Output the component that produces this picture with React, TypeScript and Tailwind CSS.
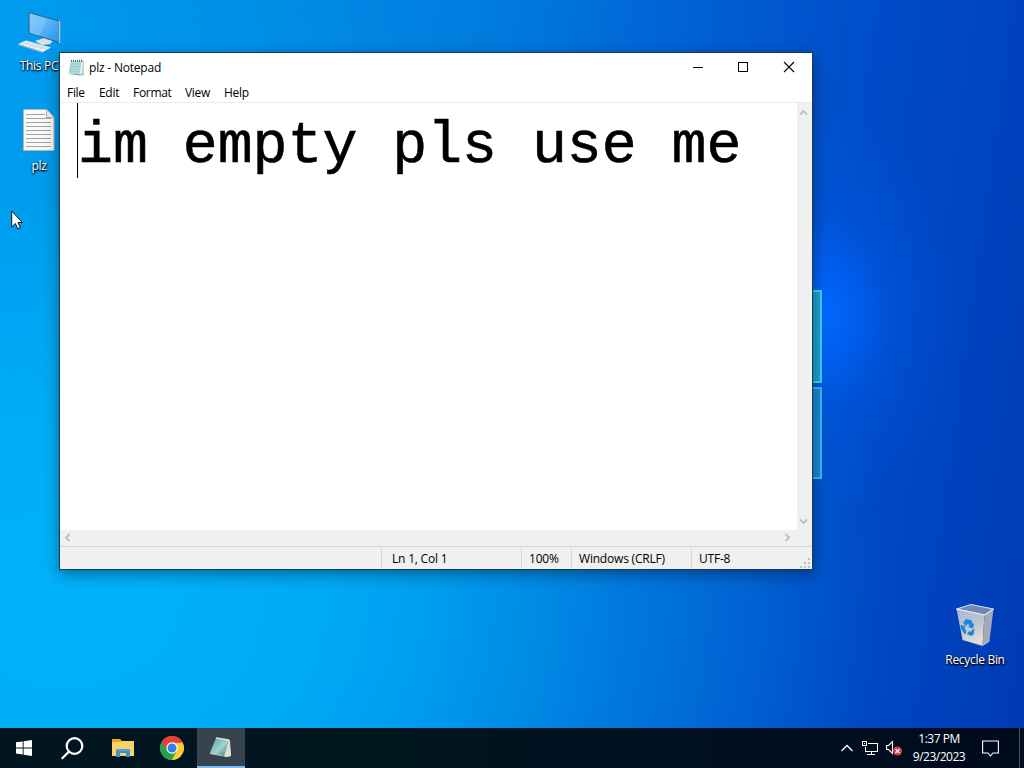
import type { ReactNode } from "react";

const menuItems = [
  { label: "File", width: "w-[18px]", gap: "mr-[14px]" },
  { label: "Edit", width: "w-[20px]", gap: "mr-[14px]" },
  { label: "Format", width: "w-[38px]", gap: "mr-[14px]" },
  { label: "View", width: "w-[25px]", gap: "mr-[14px]" },
  { label: "Help", width: "w-[25px]", gap: "" },
];

const statusCells = [
  { text: "Ln 1, Col 1", className: "w-[140px] pl-[10px]" },
  { text: "100%", className: "w-[50px] pl-[7px]" },
  { text: "Windows (CRLF)", className: "w-[120px] pl-[7px]" },
  { text: "UTF-8", className: "w-[110px] pl-[7px]" },
];

const grip = [[8, 0], [4, 4], [8, 4], [0, 8], [4, 8], [8, 8]];
const pageLines = [9, 13, 17, 21, 25, 29, 33, 37];

/* ── Desktop icons ─────────────────────────────── */

function ThisPcIcon() {
  return (
    <svg width="44" height="44" viewBox="0 0 44 44">
      <defs>
        <linearGradient id="screen" x1="0" y1="0" x2="1" y2="1">
          <stop offset="0" stopColor="#76c5fb" />
          <stop offset="0.5" stopColor="#59b3f6" />
          <stop offset="1" stopColor="#2593e9" />
        </linearGradient>
      </defs>
      <path d="M27 25l7 2v3l-7-1z" fill="#b9bfc5" />
      <path d="M18 30l9-3 9 3-3 3-8 1z" fill="#dcdfe2" />
      <path d="M12 1.500l30 8.500v21.500l-30-9.500z" fill="url(#screen)" stroke="#2a6390" strokeWidth="1" />
      <path d="M42.500 10v22" stroke="#b9c8d2" strokeWidth="1.400" />
      <path d="M13 3l17 5-8 17-9-3z" fill="#a9dcff" opacity=".28" />
      <path d="M1 33l8-3.500 25 7-8 4.500z" fill="#edf1f3" />
      <path d="M1 33l25 8v1L1 34z" fill="#a9b4bb" />
      <path d="M5 32l25 6.500M7.500 31l25 6.500M6 34.500l7-4M11 36l7-4.500M16 37.500l7-4M21 39l7-4" stroke="#c3ccd1" strokeWidth=".6" />
    </svg>
  );
}

function TextFileIcon() {
  return (
    <svg width="32" height="42" viewBox="0 0 32 42">
      <path d="M.5.500h23l7.500 8V41.500H.5z" fill="#fafafa" stroke="#b8b4b0" />
      <path d="M23.500.500v8H31" fill="#ececec" stroke="#b0b0b0" />
      <path d="M3 5.500h19" stroke="#a2a2a2" />
      {pageLines.map((y) => (
        <path key={y} d={`M3 ${y}.500h25`} stroke="#a2a2a2" />
      ))}
    </svg>
  );
}

function RecycleBinIcon() {
  return (
    <svg width="40" height="44" viewBox="0 0 40 44">
      <defs>
        <linearGradient id="bin" x1="0" y1="0" x2="0.300" y2="1">
          <stop offset="0" stopColor="#a9b8d2" />
          <stop offset="0.6" stopColor="#bfc6d2" />
          <stop offset="1" stopColor="#e2dcd6" />
        </linearGradient>
      </defs>
      <path d="M1.500 6L16 1.500 38.500 6l-9 6z" fill="#7287b6" stroke="#dde6f2" />
      <path d="M1.500 6l28 6-2 30.500-20-6z" fill="url(#bin)" />
      <path d="M29.500 12l9-6-4 32-7 4.500z" fill="#a3a9b8" />
      <path d="M1.500 6l28 6 9-6" fill="none" stroke="#edf2f9" />
      <path d="M7.500 36.500l20 6 7-4.500" fill="none" stroke="#d0cfd0" />
      <g fill="#1688d6">
        <path d="M8 20l3-4 5 1 2 4 1-.5-1 5-5-1.500 1.500-1-1.500-2.500-2 2.500z" />
        <path d="M5.500 22l5 1-1 2 2 3.500-1.500 3-4-5.500z" />
        <path d="M12 31l2-3 2.500 1v-1.500l3-2-1 6-2.500 1.500z" />
      </g>
    </svg>
  );
}

function NotepadIcon() {
  return (
    <svg width="16" height="17" viewBox="0 0 16 17">
      <path d="M3 2h12.500v14L12 16.500 1 15z" fill="#7c999b" />
      <path d="M3 2h11.500l-2 13H.5z" fill="#a9dcda" />
      <path d="M13.500 3h1.500l-.5 12-3 1 .5-2z" fill="#e9f3f2" />
      <path d="M3 5h10M2.700 7.500h10M2.200 10h10M1.800 12.500h10" stroke="#8fc8c8" strokeWidth=".7" />
      <path d="M3.500.800v2M5.500.800v2M7.500.800v2M9.500.800v2M11.500.800v2M13.500.800v2" stroke="#4f6c70" />
    </svg>
  );
}

function DesktopItem({ icon, label, className }: { icon: ReactNode; label: string; className: string }) {
  return (
    <div className={`absolute flex w-[76px] flex-col items-center text-white ${className}`}>
      {icon}
      <span className="text-[12px] leading-4 tracking-[-0.3px] whitespace-nowrap [text-shadow:1px_1px_2px_#000,0_1px_2px_#000]">
        {label}
      </span>
    </div>
  );
}

/* ── Wallpaper ─────────────────────────────── */

function Wallpaper() {
  return (
    <div className="absolute inset-0 bg-[linear-gradient(98deg,#009cf0_0%,#008fe8_22%,#007ade_45%,#0060d4_62%,#004cc8_78%,#003ab5_100%)]">
      <div className="absolute inset-0 bg-[radial-gradient(ellipse_820px_620px_at_80px_600px,#00b3f9_0%,#00b0f8d9_30%,#00a0ee66_66%,#0090e400_100%)]" />
      <div className="absolute inset-0 bg-[radial-gradient(ellipse_140px_200px_at_822px_315px,#0069ff_0%,#0064fbcc_20%,#005ae866_50%,#0050d000_100%)]" />
      <div className="absolute top-[290px] left-[720px] flex w-[102px] flex-col gap-1">
        <div className="h-[93px] border-2 border-[#3bd3f4] bg-[#1f9fd2]" />
        <div className="h-[92px] border-2 border-[#3cb8f4] bg-[#1a88d0]" />
      </div>
    </div>
  );
}

/* ── Notepad window ─────────────────────────────── */

function NotepadWindow() {
  return (
    <div className="absolute top-[52px] left-[59px] flex h-[518px] w-[754px] flex-col border border-[#163c5a] bg-white text-[12px] text-black shadow-[0_4px_14px_rgba(0,0,0,0.4)]">
      <div className="flex h-[29px] shrink-0 items-center pl-2">
        <NotepadIcon />
        <span className="ml-[5px] tracking-[-0.2px]">plz - Notepad</span>
        <svg className="ml-auto" width="120" height="29" viewBox="0 0 120 29" fill="none" stroke="#000" shapeRendering="crispEdges">
          <path d="M1 14.500h10M46.500 9.500h9v9h-9z" />
          <path d="M92 9l10 10M102 9L92 19" shapeRendering="auto" strokeWidth="1.100" />
        </svg>
      </div>

      <div className="flex h-5 shrink-0 items-center pt-px pl-[7px]">
        {menuItems.map((item) => (
          <span key={item.label} className={`whitespace-nowrap tracking-[-0.3px] ${item.width} ${item.gap}`}>
            {item.label}
          </span>
        ))}
      </div>

      <div className="flex min-h-0 flex-1 border-t border-[#ebebeb]">
        <div className="flex flex-1 pl-[17px]">
          <div className="h-[75px] w-px bg-black" />
          <div className="origin-top scale-y-[1.03] pt-[9px] font-['Liberation_Mono'] text-[58.2px] leading-[66px] whitespace-pre [-webkit-text-stroke:0.6px_#000]">
            im empty pls use me
          </div>
        </div>
        <div className="flex w-[15px] flex-col items-center justify-between bg-[#f0f0f0] pt-[6px] pr-[2px] pb-[5px]">
          <svg width="9" height="7" fill="none" stroke="#bfbfbf" strokeWidth="1.800"><path d="M1 5.500l3.500-3.500L8 5.500" /></svg>
          <svg width="9" height="7" fill="none" stroke="#bfbfbf" strokeWidth="1.800"><path d="M1 1.500L4.500 5 8 1.500" /></svg>
        </div>
      </div>

      <div className="flex h-4 shrink-0 items-center justify-between bg-[#f0f0f0] pr-[21px] pb-px pl-[4px]">
        <svg width="7" height="9" fill="none" stroke="#bfbfbf" strokeWidth="1.800"><path d="M5.500 1L2 4.500 5.500 8" /></svg>
        <svg width="7" height="9" fill="none" stroke="#bfbfbf" strokeWidth="1.800"><path d="M1.500 1L5 4.500 1.500 8" /></svg>
      </div>

      <div className="relative flex h-[23px] shrink-0 border-t border-[#d5d5d5] bg-[#f0f0f0] pl-[321px]">
        {statusCells.map((cell) => (
          <div key={cell.text} className={`my-px flex shrink-0 items-center border-l border-[#d7d7d7] pt-px whitespace-nowrap tracking-[-0.2px] ${cell.className}`}>
            {cell.text}
          </div>
        ))}
        <svg className="absolute right-[2px] bottom-px" width="10" height="10" fill="#bfbfbf">
          {grip.map(([x, y]) => (
            <rect key={`${x}-${y}`} x={x} y={y} width="2" height="2" />
          ))}
        </svg>
      </div>
    </div>
  );
}

/* ── Taskbar ─────────────────────────────── */

function Taskbar() {
  return (
    <div className="absolute inset-x-0 bottom-0 flex h-10 items-center bg-[linear-gradient(90deg,#00151f_0%,#001620_40%,#000f20_75%,#000b1c_100%)] text-white">
      <div className="flex w-12 justify-center">
        <svg width="16" height="16" viewBox="0 0 16 16" fill="#fff">
          <path d="M0 2.300l6.700-.9v6.100H0zM7.600 1.200L16 0v7.500H7.600zM0 8.400h6.700v6.100L0 13.600zM7.600 8.400H16V16l-8.400-1.200z" />
        </svg>
      </div>
      <div className="flex w-12 justify-center">
        <svg width="23" height="23" viewBox="0 0 23 23" fill="none" stroke="#fff" strokeWidth="2.200">
          <circle cx="13.500" cy="9" r="7.800" />
          <path d="M8 14.500L.8 21.700" />
        </svg>
      </div>
      <div className="flex w-[53px] justify-center">
        <svg width="22" height="18" viewBox="0 0 22 18">
          <path d="M0 0h8l2 2h12v5H0z" fill="#e8a825" />
          <path d="M0 3h9l2-1h11v15H0z" fill="#fbd267" />
          <path d="M4 10h14v8h-4v-4H8v4H4z" fill="#3d8fd1" />
          <path d="M4 10h14v2H4z" fill="#559fd6" />
        </svg>
      </div>
      <div className="flex w-[46px] justify-center">
        <svg width="24" height="24" viewBox="0 0 24 24">
          <path d="M12 12L1.600 6A12 12 0 0 1 22.400 6z" fill="#e34133" />
          <path d="M12 12l10.400-6A12 12 0 0 1 12 24z" fill="#fdcc36" />
          <path d="M12 12v12A12 12 0 0 1 1.600 6z" fill="#2ba04c" />
          <path d="M12 6.500h10.700L17 15l-5 9 5-9z" fill="#fdcc36" />
          <path d="M12 6.500h10.700A12 12 0 0 0 1.600 6L7.200 15z" fill="#e34133" />
          <path d="M7.200 15l4.800 3 4.800-3L11.600 24A12 12 0 0 1 1.600 6z" fill="#2ba04c" />
          <circle cx="12" cy="12" r="5.700" fill="#fff" />
          <circle cx="12" cy="12" r="4.500" fill="#357fe8" />
        </svg>
      </div>
      <div className="ml-[2px] flex h-10 w-12 items-center justify-center border-b-2 border-[#78bdf2] bg-[#35444d]">
        <svg width="24" height="24" viewBox="0 0 24 24">
          <defs>
            <linearGradient id="pad" x1="0" y1="0" x2="1" y2="1">
              <stop offset="0" stopColor="#5b9aa2" />
              <stop offset="0.55" stopColor="#a1d1d3" />
              <stop offset="1" stopColor="#377982" />
            </linearGradient>
          </defs>
          <path d="M7 4l14 1 1 16-4 1-17-3z" fill="#d7d4c0" />
          <path d="M7 3l13 2-5 16-14-3z" fill="url(#pad)" />
          <path d="M7 3l13 2" stroke="#d8e2e2" strokeWidth="1.400" />
          <path d="M20 5l2 16-6 1z" fill="#e2e0d6" />
        </svg>
      </div>

      {/* Tray */}
      <div className="ml-auto flex h-10 items-center">
        <svg width="12" height="8" fill="none" stroke="#fff" strokeWidth="1.300"><path d="M.5 7L6 1.500 11.500 7" /></svg>
        <svg className="ml-[9px]" width="17" height="14" viewBox="0 0 17 14" fill="none" stroke="#fff" shapeRendering="crispEdges">
          <path d="M5.500 2.500h10v8H3.500v-5M.5.500h4v4h-4zM9.500 10.500v3M5 13.500h8M2 2.500h1" />
        </svg>
        <svg className="ml-[7px]" width="17" height="16" viewBox="0 0 17 16" fill="none">
          <path d="M.6 5.500h2L6.500 1.500v12L2.600 9.500h-2z" stroke="#fff" strokeWidth="1.100" />
          <circle cx="11.500" cy="11" r="4.600" fill="#d73b43" />
          <path d="M9.500 9l4 4M13.500 9l-4 4" stroke="#fff" strokeWidth="1.100" />
        </svg>
        <div className="ml-[6px] flex w-[60px] flex-col items-center text-[12px] leading-[18px] tracking-[-0.5px] whitespace-nowrap">
          <span>1:37 PM</span>
          <span>9/23/2023</span>
        </div>
        <svg className="ml-[13px]" width="17" height="17" viewBox="0 0 17 17" fill="none" stroke="#fff" strokeWidth="1.100">
          <path d="M.6 1h15.800v12H11l-2.500 3L6 13H.6z" />
        </svg>
        <div className="ml-[20px] mr-[4px] h-10 w-px bg-[#465263]" />
      </div>
    </div>
  );
}

export default function App() {
  return (
    <div className="relative h-screen w-screen overflow-hidden font-['Open_Sans','Noto_Sans',sans-serif]">
      <Wallpaper />
      <DesktopItem icon={<ThisPcIcon />} label="This PC" className="top-[11px] left-[1px] gap-[3px]" />
      <DesktopItem icon={<TextFileIcon />} label="plz" className="top-[109px] left-px gap-[7px]" />
      <DesktopItem icon={<RecycleBinIcon />} label="Recycle Bin" className="top-[603px] left-[937px] gap-[5px]" />
      <NotepadWindow />
      <Taskbar />
      <svg className="absolute top-[210px] left-[11px]" width="12" height="20" viewBox="0 0 12 20">
        <path d="M.7 1v16l3.700-3.500 2.300 5.300 2.600-1.100-2.300-5.200h4.400z" fill="#fff" stroke="#111" strokeWidth="1" />
      </svg>
    </div>
  );
}
